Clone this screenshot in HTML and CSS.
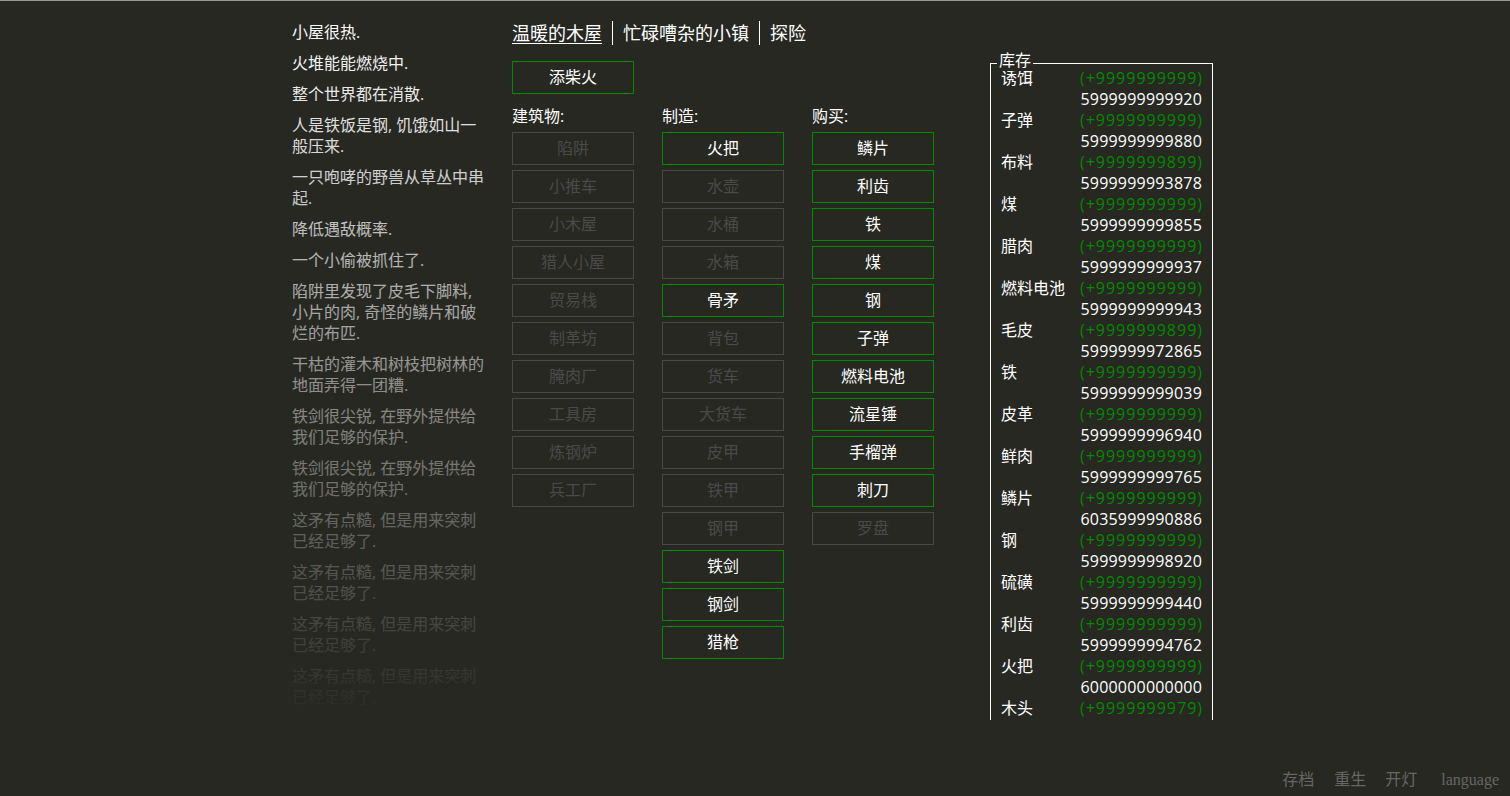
FILE: index.html
```html
<!DOCTYPE html>
<html lang="zh-CN">
<head>
<meta charset="utf-8">
<title>A Dark Room</title>
<link rel="stylesheet" href="styles.css">
</head>
<body>
<div class="page">
  <div class="wrapper">
    <div class="notifications">
      <div class="notice">小屋很热.</div>
      <div class="notice">火堆能能燃烧中.</div>
      <div class="notice">整个世界都在消散.</div>
      <div class="notice">人是铁饭是钢, 饥饿如山一般压来.</div>
      <div class="notice">一只咆哮的野兽从草丛中串起.</div>
      <div class="notice">降低遇敌概率.</div>
      <div class="notice">一个小偷被抓住了.</div>
      <div class="notice">陷阱里发现了皮毛下脚料, 小片的肉, 奇怪的鳞片和破烂的布匹.</div>
      <div class="notice">干枯的灌木和树枝把树林的地面弄得一团糟.</div>
      <div class="notice">铁剑很尖锐, 在野外提供给我们足够的保护.</div>
      <div class="notice">铁剑很尖锐, 在野外提供给我们足够的保护.</div>
      <div class="notice">这矛有点糙, 但是用来突刺已经足够了.</div>
      <div class="notice">这矛有点糙, 但是用来突刺已经足够了.</div>
      <div class="notice">这矛有点糙, 但是用来突刺已经足够了.</div>
      <div class="notice">这矛有点糙, 但是用来突刺已经足够了.</div>
      <div class="notifyGradient"></div>
    </div>
    <div class="main">
      <div class="header">
        <span class="headerButton selected">温暖的木屋</span>
        <span class="headerButton">忙碌嘈杂的小镇</span>
        <span class="headerButton">探险</span>
      </div>
      <div class="content">
        <div class="room">
          <div class="button">添柴火</div>
          <div class="columns">
            <div class="column">
              <div class="colTitle">建筑物:</div>
              <div class="button disabled">陷阱</div>
              <div class="button disabled">小推车</div>
              <div class="button disabled">小木屋</div>
              <div class="button disabled">猎人小屋</div>
              <div class="button disabled">贸易栈</div>
              <div class="button disabled">制革坊</div>
              <div class="button disabled">腌肉厂</div>
              <div class="button disabled">工具房</div>
              <div class="button disabled">炼钢炉</div>
              <div class="button disabled">兵工厂</div>
            </div>
            <div class="column">
              <div class="colTitle">制造:</div>
              <div class="button">火把</div>
              <div class="button disabled">水壶</div>
              <div class="button disabled">水桶</div>
              <div class="button disabled">水箱</div>
              <div class="button">骨矛</div>
              <div class="button disabled">背包</div>
              <div class="button disabled">货车</div>
              <div class="button disabled">大货车</div>
              <div class="button disabled">皮甲</div>
              <div class="button disabled">铁甲</div>
              <div class="button disabled">钢甲</div>
              <div class="button">铁剑</div>
              <div class="button">钢剑</div>
              <div class="button">猎枪</div>
            </div>
            <div class="column">
              <div class="colTitle">购买:</div>
              <div class="button">鳞片</div>
              <div class="button">利齿</div>
              <div class="button">铁</div>
              <div class="button">煤</div>
              <div class="button">钢</div>
              <div class="button">子弹</div>
              <div class="button">燃料电池</div>
              <div class="button">流星锤</div>
              <div class="button">手榴弹</div>
              <div class="button">刺刀</div>
              <div class="button disabled">罗盘</div>
            </div>
          </div>
        </div>
        <div class="storesClip">
          <div class="stores">
            <span class="legend">库存</span>
            <div class="row"><div class="rowLine"><span class="key">诱饵</span><span class="income">(+9999999999)</span></div><div class="val">5999999999920</div></div>
            <div class="row"><div class="rowLine"><span class="key">子弹</span><span class="income">(+9999999999)</span></div><div class="val">5999999999880</div></div>
            <div class="row"><div class="rowLine"><span class="key">布料</span><span class="income">(+9999999899)</span></div><div class="val">5999999993878</div></div>
            <div class="row"><div class="rowLine"><span class="key">煤</span><span class="income">(+9999999999)</span></div><div class="val">5999999999855</div></div>
            <div class="row"><div class="rowLine"><span class="key">腊肉</span><span class="income">(+9999999999)</span></div><div class="val">5999999999937</div></div>
            <div class="row"><div class="rowLine"><span class="key">燃料电池</span><span class="income">(+9999999999)</span></div><div class="val">5999999999943</div></div>
            <div class="row"><div class="rowLine"><span class="key">毛皮</span><span class="income">(+9999999899)</span></div><div class="val">5999999972865</div></div>
            <div class="row"><div class="rowLine"><span class="key">铁</span><span class="income">(+9999999999)</span></div><div class="val">5999999999039</div></div>
            <div class="row"><div class="rowLine"><span class="key">皮革</span><span class="income">(+9999999999)</span></div><div class="val">5999999996940</div></div>
            <div class="row"><div class="rowLine"><span class="key">鲜肉</span><span class="income">(+9999999999)</span></div><div class="val">5999999999765</div></div>
            <div class="row"><div class="rowLine"><span class="key">鳞片</span><span class="income">(+9999999999)</span></div><div class="val">6035999990886</div></div>
            <div class="row"><div class="rowLine"><span class="key">钢</span><span class="income">(+9999999999)</span></div><div class="val">5999999998920</div></div>
            <div class="row"><div class="rowLine"><span class="key">硫磺</span><span class="income">(+9999999999)</span></div><div class="val">5999999999440</div></div>
            <div class="row"><div class="rowLine"><span class="key">利齿</span><span class="income">(+9999999999)</span></div><div class="val">5999999994762</div></div>
            <div class="row"><div class="rowLine"><span class="key">火把</span><span class="income">(+9999999999)</span></div><div class="val">6000000000000</div></div>
            <div class="row"><div class="rowLine"><span class="key">木头</span><span class="income">(+9999999979)</span></div><div class="val">5999999999999</div></div>
          </div>
        </div>
      </div>
    </div>
  </div>
  <div class="footer">
    <span class="footerItem">存档</span>
    <span class="footerItem">重生</span>
    <span class="footerItem">开灯</span>
    <span class="footerItem lang">language</span>
  </div>
</div>
</body>
</html>
```

FILE: styles.css
```css
html, body {
  margin: 0;
  padding: 0;
}
body {
  background: #272822;
  color: #ffffff;
  border-top: 1px solid #9a9a9a;
  font-family: "Open Sans", "Noto Sans CJK SC", sans-serif;
  font-size: 16px;
  line-height: 21px;
  overflow: hidden;
}
.page {
  height: 795px;
  display: flex;
  flex-direction: column;
}
.wrapper {
  flex: 1;
  width: 926px;
  margin: 0 auto;
  padding-top: 20px;
  display: flex;
  align-items: flex-start;
  min-height: 0;
}
.notifications {
  position: relative;
  width: 196px;
  margin-right: 24px;
  height: 700px;
  overflow: hidden;
  padding-top: 1px;
  box-sizing: border-box;
}
.notice {
  margin-bottom: 10px;
}
.notifyGradient {
  position: absolute;
  left: 0;
  top: 0;
  width: 100%;
  height: 100%;
  background: linear-gradient(to bottom, rgba(39, 40, 34, 0) 0%, rgba(39, 40, 34, 1) 100%);
}
.main {
  display: flex;
  flex-direction: column;
}
.header {
  display: flex;
  font-size: 18px;
  line-height: 24px;
  height: 24px;
}
.headerButton {
  padding: 0 10px;
  border-left: 1px solid #ffffff;
}
.headerButton:first-child {
  padding-left: 0;
  border-left: none;
}
.headerButton.selected {
  text-decoration: underline;
  text-underline-offset: 3px;
}
.content {
  display: flex;
  align-items: flex-start;
  margin-top: 5px;
}
.room {
  padding-top: 11px;
  width: 422px;
  margin-right: 56px;
}
.button {
  width: 120px;
  height: 31px;
  line-height: 31px;
  border: 1px solid #008a00;
  text-align: center;
  color: #ffffff;
  margin-bottom: 5px;
}
.button.disabled {
  border-color: #484848;
  color: #4a4a4a;
}
.columns {
  display: flex;
  gap: 28px;
  margin-top: 12px;
}
.column {
  width: 122px;
}
.colTitle {
  height: 21px;
  margin-bottom: 5px;
}
.storesClip {
  height: 670px;
  padding-top: 13px;
  box-sizing: border-box;
  overflow: hidden;
}
.stores {
  position: relative;
  width: 201px;
  border: 1px solid #ffffff;
  padding: 4px 10px 0 10px;
}
.legend {
  position: absolute;
  top: -14px;
  left: 6px;
  padding: 0 2px;
  background: #272822;
}
.rowLine {
  display: flex;
  justify-content: space-between;
}
.income {
  color: #008a00;
  letter-spacing: 1px;
  margin-right: -1px;
}
.val {
  text-align: right;
  letter-spacing: 0.2px;
}
.footer {
  display: flex;
  justify-content: flex-end;
  padding-right: 11px;
  padding-bottom: 6px;
  color: #666666;
}
.footerItem + .footerItem {
  margin-left: 19px;
}
.footerItem:nth-child(2) {
  margin-left: 20px;
}
.footerItem.lang {
  margin-left: 24px;
  font-family: "Liberation Serif", serif;
}
```
